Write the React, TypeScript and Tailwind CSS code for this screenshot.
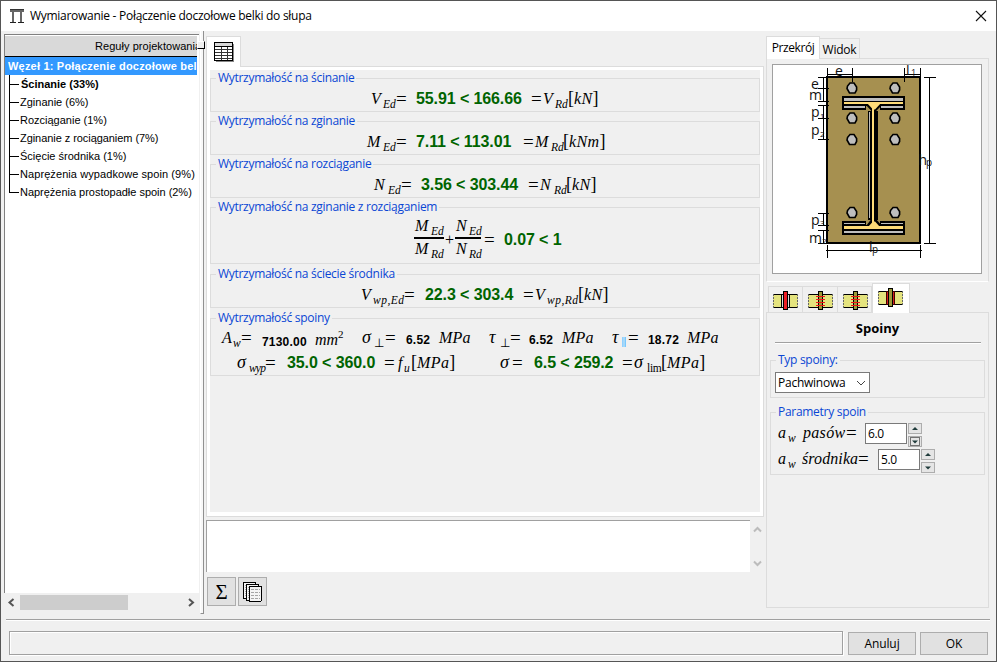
import React, { type ReactNode } from "react";

const ui = "font-['Open_Sans','Noto_Sans',sans-serif]";
const arial = "font-['Liberation_Sans',Arial,sans-serif]";
const serif = "font-['Liberation_Serif','Times_New_Roman',serif]";

function Group({ title, className, children }: { title: string; className: string; children: ReactNode }) {
  return (
    <fieldset className={`min-w-0 border border-[#dcdcdc] ${className}`}>
      <legend className={`ml-[5px] h-[15px] px-[2px] text-[12px] leading-[14px] -tracking-[0.29px] whitespace-nowrap text-[#0a46d4] ${ui}`}>{title}</legend>
      {children}
    </fieldset>
  );
}

/* One glyph run of a formula with a fixed advance width. */
function M({ w, c = "", children }: { w: string; c?: string; children?: ReactNode }) {
  return <span className={`block shrink-0 whitespace-nowrap ${w} ${c}`}>{children}</span>;
}

const sub = "relative top-[4px] text-[11.5px] font-normal";
const val = `font-['Liberation_Sans',Arial,sans-serif] not-italic font-bold text-[16px] -tracking-[0.1px] text-[#006400]`;
const small = `font-['Liberation_Sans',Arial,sans-serif] not-italic font-bold text-[12px] tracking-[0.2px] relative top-px`;
const line = `flex items-baseline italic text-[16px] leading-[20px] h-[20px] text-black ${serif}`;

function Eq({ w = "w-[11px]" }: { w?: string }) {
  return <M w={w} c="relative top-px not-italic text-[19px] leading-[18px]">=</M>;
}

/* Unit in tall upright brackets. */
function Unit({ w = "", children }: { w?: string; children: ReactNode }) {
  return (
    <span className={`flex shrink-0 items-baseline ${w}`}>
      <span className="w-[6px] text-[18px] not-italic">[</span>
      <span className="tracking-[0.4px]">{children}</span>
      <span className="text-[18px] not-italic">]</span>
    </span>
  );
}

const rules = [
  { label: "Ścinanie (33%)", cls: "font-bold pl-px" },
  { label: "Zginanie (6%)", cls: "" },
  { label: "Rozciąganie (1%)", cls: "" },
  { label: "Zginanie z rociąganiem (7%)", cls: "-tracking-[0.06px]" },
  { label: "Ścięcie środnika (1%)", cls: "" },
  { label: "Naprężenia wypadkowe spoin (9%)", cls: "tracking-[0.08px]" },
  { label: "Naprężenia prostopadłe spoin (2%)", cls: "-tracking-[0.02px]" },
];

function Tree() {
  return (
    <aside className="w-[200px] shrink-0 pt-[3px] pl-[4px]">
      <div className="h-[559px] w-[195px] overflow-hidden border-t border-l border-[#808080] bg-white">
        <div className={`mr-[2px] h-[22px] border-t border-b border-t-white border-b-black bg-[#d9d9d9] pl-[90px] text-[11px] leading-[21px] tracking-[0.05px] whitespace-nowrap ${arial} overflow-hidden`}>
          Reguły projektowania
        </div>
        <div className={`mr-[2px] h-[18px] overflow-hidden bg-[#3399ff] pl-[3px] text-[11px] leading-[18px] font-bold tracking-[0.2px] whitespace-nowrap text-white ${arial}`}>
          Węzeł 1: Połączenie doczołowe belki do słupa
        </div>
        <ul className={`text-[11px] text-black ${arial}`}>
          {rules.map((r, i) => (
            <li key={r.label} className="flex h-[18px]">
              <svg width="15" height="18" className="shrink-0" shapeRendering="crispEdges">
                <path d={i === 6 ? "M4.5 0V9.5H14" : "M4.5 0V18M4.5 9.5H14"} stroke="#000" fill="none" />
              </svg>
              <span className={`leading-[18px] whitespace-nowrap ${r.cls}`}>{r.label}</span>
            </li>
          ))}
        </ul>
      </div>
      <div className="mt-[2px] flex h-[15px] w-[194px] items-center">
        <svg width="16" height="15"><path d="M9.5 4L5.5 7.5L9.5 11" stroke="#555" strokeWidth="2" fill="none" /></svg>
        <div className="h-[15px] w-[108px] bg-[#cdcdcd]" />
        <svg width="70" height="15"><path d="M61 4L65 7.5L61 11" stroke="#555" strokeWidth="2" fill="none" /></svg>
      </div>
    </aside>
  );
}

function Sash() {
  return (
    <div className="relative z-10 h-[583px] w-[4px] shrink-0 border-r border-b border-[#909090] border-l border-l-white bg-[#f8f8f8]">
      <div className="absolute top-[10px] -left-[4px] h-[8px] w-[8px] border-t border-l border-r border-b border-t-white border-l-white border-r-black border-b-black bg-[#f0f0f0]" />
    </div>
  );
}

function Check({ pad, sym, s, v1, w1, unit, eqw }: { pad: string; sym: [string, string]; s: [string, string, string, string]; v1: string; w1: string; unit: string; eqw: string }) {
  return (
    <div className={`${line} mt-[2px] ${pad}`}>
      <M w={sym[1]}>{sym[0]}</M>
      <M w={s[1]} c={sub}>{s[0]}</M>
      <Eq w={eqw} />
      <M w={w1} c={val}>{v1}</M>
      <Eq w="w-[12px]" />
      <M w={sym[1]}>{sym[0]}</M>
      <M w={s[3]} c={sub}>{s[2]}</M>
      <Unit>{unit}</Unit>
    </div>
  );
}

function Frac({ a }: { a: string }) {
  const w = a === "M" ? "w-[16px]" : "w-[13px]";
  return (
    <div className={`flex flex-col ${a === "M" ? "w-[30px]" : "w-[26px]"} ${serif} text-[16px] italic`}>
      <div className="flex h-[22px] items-baseline border-b-2 border-black pl-px leading-[18px]"><M w={w}>{a}</M><M w="" c={sub}>Ed</M></div>
      <div className="flex h-[24px] items-baseline pt-px pl-px leading-[18px]"><M w={w}>{a}</M><M w="" c={sub}>Rd</M></div>
    </div>
  );
}

function Results() {
  return (
    <div className="h-[451px] w-[558px] border border-[#dcdcdc] bg-white pt-[3px] pr-[3px] pb-[4px] pl-[3px]">
      <div className="h-full w-[550px] bg-[#f0f0f0] pt-px">
        <Group title="Wytrzymałość na ścinanie" className="h-[41px]">
          <Check pad="pl-[160px]" sym={["V", "w-[12px]"]} s={["Ed", "w-[13px]", "Rd", "w-[13px]"]} eqw="w-[20px]" v1="55.91 < 166.66" w1="w-[115px]" unit="kN" />
        </Group>
        <Group title="Wytrzymałość na zginanie" className="mt-[2px] h-[41px]">
          <Check pad="pl-[156px]" sym={["M", "w-[16px]"]} s={["Ed", "w-[13px]", "Rd", "w-[12px]"]} eqw="w-[20px]" v1="7.11 < 113.01" w1="w-[107px]" unit="kNm" />
        </Group>
        <Group title="Wytrzymałość na rozciąganie" className="mt-[2px] h-[41px]">
          <Check pad="pl-[163px]" sym={["N", "w-[14px]"]} s={["Ed", "w-[13px]", "Rd", "w-[12px]"]} eqw="w-[20px]" v1="3.56 < 303.44" w1="w-[107px]" unit="kN" />
        </Group>
        <Group title="Wytrzymałość na zginanie z rozciąganiem" className="mt-[2px] h-[64px]">
          <div className="flex h-[46px] items-center pt-[3px] pl-[203px]">
            <Frac a="M" />
            <span className={`w-[11px] text-center text-[16px] ${serif}`}>+</span>
            <Frac a="N" />
            <span className={`w-[23px] pl-[3px] text-[19px] leading-[20px] ${serif}`}>=</span>
            <span className={val}>0.07 &lt; 1</span>
          </div>
        </Group>
        <Group title="Wytrzymałość na ściecie środnika" className="mt-[3px] h-[41px]">
          <div className={`${line} mt-[2px] pl-[150px]`}>
            <M w="w-[12px]">V</M><M w="w-[31px]" c={`${sub} tracking-[0.5px]`}>wp,Ed</M><Eq w="w-[21px]" />
            <M w="w-[98px]" c={val}>22.3 &lt; 303.4</M><Eq w="w-[12px]" />
            <M w="w-[12px]">V</M><M w="w-[31px]" c={`${sub} tracking-[0.5px]`}>wp,Rd</M><Unit>kN</Unit>
          </div>
        </Group>
        <Group title="Wytrzymałość spoiny" className="mt-[3px] h-[65px]">
          <div className={`${line} mt-px pl-[11px]`}>
            <M w="w-[11px]">A</M><M w="w-[8px]" c={sub}>w</M><Eq w="w-[21px]" />
            <M w="w-[53px]" c={`${small} pt-[2px]`}><span className="relative top-[2px]">7130.00</span></M><M w="w-[23px]" c="relative top-[2px]">mm</M><M w="w-[24px]" c="relative -top-[5px] text-[11px] not-italic">2</M>
            <M w="w-[12px]" c="text-[18px]">σ</M><M w="w-[11px]" c={`${sub} not-italic`}>⊥</M><Eq w="w-[21px]" />
            <M w="w-[33px]" c={small}>6.52</M><M w="w-[50px]" c="tracking-[0.2px]">MPa</M>
            <M w="w-[11px]" c="text-[18px]">τ</M><M w="w-[10px]" c={`${sub} not-italic`}>⊥</M><Eq w="w-[19px]" />
            <M w="w-[33px]" c={small}>6.52</M><M w="w-[50px]" c="tracking-[0.2px]">MPa</M>
            <M w="w-[10px]" c="text-[18px]">τ</M>
            <span className="relative top-[5px] mr-[2px] flex h-[10px] w-[4px] self-center"><i className="w-px bg-[#8fd0ff]" /><i className="w-[2px] bg-[#a6d8f8]" /><i className="w-px bg-[#78c8ff]" /></span>
            <Eq w="w-[20px]" /><M w="w-[39px]" c={small}>18.72</M><M w="" c="tracking-[0.2px]">MPa</M>
          </div>
          <div className={`${line} mt-[5px] pl-[26px]`}>
            <M w="w-[12px]" c="text-[18px]">σ</M><M w="w-[16px]" c={`${sub} -tracking-[0.8px]`}>wyp</M><Eq w="w-[22px]" />
            <M w="w-[97px]" c={val}>35.0 &lt; 360.0</M><Eq w="w-[14px]" /><M w="w-[6px]">f</M><M w="w-[7px]" c={sub}>u</M>
            <Unit w="w-[89px]">MPa</Unit>
            <M w="w-[12px]" c="text-[18px]">σ</M><Eq w="w-[22px]" /><M w="w-[88px]" c={val}>6.5 &lt; 259.2</M><Eq w="w-[12px]" />
            <M w="w-[13px]" c="text-[18px]">σ</M><M w="w-[14px]" c={`${sub} not-italic -tracking-[0.3px]`}>lim</M><Unit>MPa</Unit>
          </div>
        </Group>
      </div>
    </div>
  );
}

function Middle() {
  return (
    <main className="w-[562px] shrink-0 pt-[5px] pl-[2px]">
      <div className="relative z-10 -mb-px h-[31px] w-[35px] border border-b-0 border-[#dcdcdc] bg-white pt-[5px] pl-[7px]">
        <svg width="20" height="20" shapeRendering="crispEdges">
          <path d="M19.5 2V19.5H2" stroke="#888" fill="none" />
          <rect x=".5" y=".5" width="18" height="18" fill="#fff" stroke="#000" />
          <rect x="1" y="1" width="17" height="3" fill="#d8d8d8" />
          <path d="M1 4.5H18" stroke="#000" />
          <path d="M1 7.5H18M1 10.5H18M1 13.5H18M1 16.5H18M7.5 5V18M13.5 5V18" stroke="#333" />
        </svg>
      </div>
      <Results />
      <div className="mt-[3px] flex">
        <div className="h-[52px] w-[544px] border-t border-l border-[#a0a0a0] bg-white" />
        <svg width="16" height="52" fill="none" stroke="#bcbcbc" strokeWidth="2"><path d="M4 11.5L7.5 8L11 11.5M4 41.5L7.5 45L11 41.5" /></svg>
      </div>
      <div className="mt-[5px] ml-px flex gap-[2px]">
        <button className={`h-[29px] w-[29px] border border-[#adadad] bg-[#e1e1e1] text-[21px] leading-[26px] text-black ${serif}`}>Σ</button>
        <button className="h-[29px] w-[29px] border border-[#adadad] bg-[#e1e1e1]">
          <svg width="27" height="27" fill="#f4f4f4" stroke="#000" shapeRendering="crispEdges">
            <path d="M4.5 4.5H16.5V20.5H4.5Z" /><path d="M7.5 6.5H19.5V22.5H7.5Z" /><path d="M10.5 8.5H22.5V22.5L21.5 23.5H10.5Z" />
            <path d="M12 11.5H21M12 14.5H21M12 17.5H21M12 20.5H21" stroke="#a5a5a5" strokeDasharray="3 1" />
            <path d="M6 7V19M9 9V21" stroke="#aaa" strokeDasharray="1 1" />
          </svg>
        </button>
      </div>
    </main>
  );
}

function Section() {
  const bolts = [[852, 88], [895, 88], [852, 118], [895, 118], [852, 139.5], [895, 139.5], [852, 212.5], [895, 212.5]];
  return (
    <svg width="208" height="208" viewBox="773 65 208 208" className="block">
      <g shapeRendering="crispEdges">
        <rect x="827" y="77" width="93" height="166" fill="#a69050" stroke="#000" strokeWidth="2" />
        <path d="M842 96H905V110H880V106H866V110H842Z" fill="#000" />
        <path d="M844 98H903V101H844ZM844 106H865V108H844ZM881 106H903V108H881Z" fill="#bebebe" />
        <path d="M844 102H903V104H844Z" fill="#ffdc78" />
        <path d="M842 221H866V225H880V221H905V235H842Z" fill="#000" />
        <path d="M844 223H865V224H844ZM881 223H903V224H881ZM844 231H903V233H844Z" fill="#bebebe" />
        <path d="M844 226H903V229H844Z" fill="#ffdc78" />
        <rect x="868" y="111" width="10" height="109" fill="#000" />
        <rect x="869" y="112" width="1" height="106" fill="#bebebe" />
      </g>
      <path d="M865 104H883L876.5 110.5V219.5L882 226H866L871 219.5V110.5Z" fill="#000" />
      <path d="M867 103H881L875 109.5H873ZM868 227H880L875 221.5H873Z" fill="#ffdc78" />
      <rect x="872" y="108" width="2" height="116" fill="#ffdc78" />
      {bolts.map(([x, y]) => (
        <path key={`${x}-${y}`} d={`M${x - 2} ${y - 5}H${x + 2}L${x + 4.6} ${y - 1}V${y + 2}L${x + 3} ${y + 5}H${x - 2.5}L${x - 5} ${y + 0.5}L${x - 4.5} ${y - 2}Z`} fill="#bebebe" stroke="#000" strokeWidth="1.6" />
      ))}
      <path d="M827.5 68V77M852.5 68V82M827 74.5H853M904.5 68V82M920.5 68V77M904 74.5H921M929.5 77V244M924 77.5H936M924 243.5H936M823.5 77V102M818 77.5H829M818 88.5H829M818 101.5H829M823.5 105V140M818 105.5H829M818 118.5H829M818 139.5H829M823.5 213V226M818 213.5H829M818 225.5H829M823.5 230V244M818 230.5H829M818 243.5H829M827.5 245V258M920.5 245V258M826 250.5H922" stroke="#000" fill="none" shapeRendering="crispEdges" />
      <g className={ui} fontSize="14" fill="#111">
        <text x="835" y="76">e</text><text x="906" y="75">l</text><text x="911" y="76" fontSize="9">1</text>
        <text x="811" y="89">e</text><text x="809" y="100">m</text><text x="811" y="117">p</text><text x="811" y="135">p</text>
        <text x="820" y="119" fontSize="8">1</text><text x="820" y="137" fontSize="8">2</text>
        <text x="811" y="225">p</text><text x="820" y="226" fontSize="8">3</text><text x="809" y="243">m</text><text x="822" y="244" fontSize="8">2</text>
        <text x="918.5" y="165">h</text><text x="926" y="166" fontSize="10">p</text>
        <text x="869" y="252">l</text><text x="872" y="253" fontSize="10">p</text>
      </g>
    </svg>
  );
}

function PlateIcon({ kind }: { kind: "plate" | "bolts" | "weld" }) {
  return (
    <svg width="26" height="22" shapeRendering="crispEdges" className="block">
      <rect x="0" y="4" width="25" height="14" fill="#e4e37e" />
      <path d="M0 4.5H25M0 17.5H25" stroke="#000" />
      <path d="M.5 4V18M24.5 4V18" stroke="#666" strokeDasharray="2 1" />
      {kind === "plate" && <path d="M8.5 4.5H16.5V17.5H8.5Z" fill="#ddd" stroke="#000" />}
      {kind === "weld" && <path d="M8.5 4.5H16.5V17.5H8.5Z" fill="#d81e1e" stroke="#400" />}
      <rect x="10.5" y="1.5" width="4" height="18" fill={kind === "plate" ? "#ed1c24" : "#9b9a38"} stroke="#000" />
      {kind === "bolts" && <path d="M8 6.5H17M8 9.5H17M8 12.5H17M8 15.5H17" stroke="#f01818" />}
    </svg>
  );
}

function Spin({ value, focused = false }: { value: string; focused?: boolean }) {
  return (
    <div className="flex gap-px">
      <div className={`h-[21px] w-[42px] border border-[#7a7a7a] bg-white pl-[2px] text-[12px] leading-[19px] -tracking-[0.4px] ${ui}`}>{value}</div>
      <div className="flex flex-col gap-[2px]">
        {[0, 1].map((d) => (
          <button key={d} className="h-[11px] w-[14px] border border-[#adadad] bg-[#e5e5e5]">
            <svg width="12" height="9" className="block">
              {d === 1 && focused && <rect x="1.5" y=".5" width="9" height="8" fill="none" stroke="#000" strokeDasharray="1 1" />}
              <path d={d ? "M3 3.5H9L6 6.5Z" : "M3 6H9L6 3Z"} fill="#203c3c" />
            </svg>
          </button>
        ))}
      </div>
    </div>
  );
}

function Right() {
  const tab = "h-[27px] border border-b-0 border-[#dcdcdc] pt-[3px]";
  return (
    <section className={`w-[223px] shrink-0 pt-[5px] ${ui} text-[12px] text-black`}>
      <div className="relative z-10 -mb-px flex items-end">
        <div className="h-[23px] w-[54px] border border-b-0 border-[#dcdcdc] bg-white text-center leading-[22px] -tracking-[0.4px]">Przekrój</div>
        <div className="mb-px h-[20px] w-[40px] border border-b-0 border-l-0 border-[#dcdcdc] text-center leading-[21px] -tracking-[0.2px]">Widok</div>
      </div>
      <div className="h-[224px] border border-b-white border-[#dcdcdc] pt-[5px] pl-[5px]">
        <div className="h-[210px] w-[210px] border border-[#a0a0a0] bg-white"><Section /></div>
      </div>
      <div className="relative z-10 mt-px -mb-px flex items-end pl-[2px]">
        <div className={`${tab} w-[35px] pl-[4px]`}><PlateIcon kind="plate" /></div>
        <div className={`${tab} w-[35px] border-l-0 pl-[5px]`}><PlateIcon kind="bolts" /></div>
        <div className={`${tab} w-[34px] border-l-0 pl-[5px]`}><PlateIcon kind="bolts" /></div>
        <div className="h-[30px] w-[38px] border border-b-0 border-[#dcdcdc] bg-white pt-[3px] pl-[5px]"><PlateIcon kind="weld" /></div>
      </div>
      <div className="h-[296px] border border-[#dcdcdc] px-[3px]">
        <h2 className="h-[29px] text-center text-[13px] leading-[30px] font-bold">Spoiny</h2>
        <div className="ml-[5px] h-[2px] w-[206px] border-t border-b border-[#a0a0a0] border-b-white" />
        <Group title="Typ spoiny:" className="mt-[9px] h-[45px]">
          <div className="mt-[4px] ml-[4px] flex h-[21px] w-[95px] items-center justify-between border border-[#7a7a7a] bg-white pr-[3px] pl-[2px] leading-[18px] -tracking-[0.25px]">
            Pachwinowa
            <svg width="10" height="8" fill="none" stroke="#444"><path d="M1 2L5 6L9 2" /></svg>
          </div>
        </Group>
        <Group title="Parametry spoin" className="mt-[7px] h-[70px]">
          <div className={`${line} mt-[3px] h-[25px] pl-[7px]`}>
            <M w="w-[10px]">a</M><M w="w-[15px]" c={sub}>w</M><M w="w-[43px]" c="tracking-[0.3px]">pasów</M><Eq w="w-[19px]" />
            <div className="self-start not-italic"><Spin value="6.0" focused /></div>
          </div>
          <div className={`${line} mt-px h-[25px] pl-[7px]`}>
            <M w="w-[10px]">a</M><M w="w-[14px]" c={sub}>w</M><M w="w-[56px]" c="tracking-[0.1px]">środnika</M><Eq w="w-[20px]" />
            <div className="self-start not-italic"><Spin value="5.0" /></div>
          </div>
        </Group>
      </div>
    </section>
  );
}

export default function App() {
  return (
    <div className="flex h-[662px] w-[997px] flex-col overflow-hidden border border-[#555] bg-[#f0f0f0] text-black">
      <header className="flex h-[30px] shrink-0 items-center bg-white pr-[9px] pl-[9px]">
        <svg width="14" height="15" className="mr-[6px]" shapeRendering="crispEdges">
          <rect x="0" y="0" width="14" height="3" fill="#666" />
          <path d="M0 .5H14" stroke="#333" />
          <rect x="2" y="3" width="2" height="10" fill="#666" />
          <rect x="10" y="3" width="2" height="10" fill="#666" />
          <path d="M0 13.5H6M8 13.5H14" stroke="#222" />
        </svg>
        <h1 className={`grow text-[12px] -tracking-[0.28px] ${ui}`}>Wymiarowanie - Połączenie doczołowe belki do słupa</h1>
        <svg width="12" height="12" stroke="#111" strokeWidth="1.1"><path d="M1 1L11 11M11 1L1 11" /></svg>
      </header>
      <div className="-ml-px flex h-[588px] shrink-0">
        <Tree />
        <Sash />
        <Middle />
        <Right />
      </div>
      <div className="ml-[5px] h-[2px] w-[984px] shrink-0 border-t border-b border-[#a0a0a0] border-b-white" />
      <footer className={`mt-[10px] flex pl-[8px] text-[12px] ${ui}`}>
        <div className="h-[24px] w-[834px] border border-[#a0a0a0] shadow-[1px_1px_0_#fff,inset_1px_1px_0_#fff]" />
        <button className="mt-px ml-[5px] h-[23px] w-[68px] border border-[#adadad] bg-[#e1e1e1] leading-[21px] -tracking-[0.1px]">Anuluj</button>
        <button className="mt-px ml-[4px] h-[23px] w-[68px] border border-[#adadad] bg-[#e1e1e1] leading-[21px] -tracking-[0.2px]">OK</button>
      </footer>
    </div>
  );
}
